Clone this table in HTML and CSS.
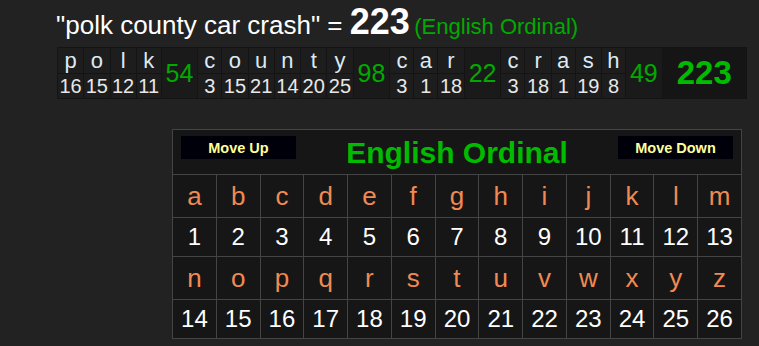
FILE: index.html
```html
<!DOCTYPE html>
<html>
<head>
<meta charset="utf-8">
<link rel="stylesheet" href="styles.css">
</head>
<body>
<div class="page">
  <div class="title"><span class="phrase">"polk county car crash" = </span><span class="total">223</span> <span class="cname">(English Ordinal)</span></div>
  <table class="words">
    <tr>
      <td class="l">p</td><td class="l">o</td><td class="l">l</td><td class="l">k</td><td class="sum" rowspan="2">54</td>
      <td class="l">c</td><td class="l">o</td><td class="l">u</td><td class="l">n</td><td class="l">t</td><td class="l">y</td><td class="sum" rowspan="2">98</td>
      <td class="l">c</td><td class="l">a</td><td class="l">r</td><td class="sum" rowspan="2">22</td>
      <td class="l">c</td><td class="l">r</td><td class="l">a</td><td class="l">s</td><td class="l">h</td><td class="sum" rowspan="2">49</td>
      <td class="grand" rowspan="2">223</td>
    </tr>
    <tr>
      <td class="n">16</td><td class="n">15</td><td class="n">12</td><td class="n">11</td>
      <td class="n">3</td><td class="n">15</td><td class="n">21</td><td class="n">14</td><td class="n">20</td><td class="n">25</td>
      <td class="n">3</td><td class="n">1</td><td class="n">18</td>
      <td class="n">3</td><td class="n">18</td><td class="n">1</td><td class="n">19</td><td class="n">8</td>
    </tr>
  </table>
  <table class="chart">
    <tr class="hd">
      <td colspan="13">
        <div class="hdbar">
          <button class="mv">Move Up</button>
          <span class="cipher-title">English Ordinal</span>
          <button class="mv">Move Down</button>
        </div>
      </td>
    </tr>
    <tr class="lt"><td>a</td><td>b</td><td>c</td><td>d</td><td>e</td><td>f</td><td>g</td><td>h</td><td>i</td><td>j</td><td>k</td><td>l</td><td>m</td></tr>
    <tr class="nm"><td>1</td><td>2</td><td>3</td><td>4</td><td>5</td><td>6</td><td>7</td><td>8</td><td>9</td><td>10</td><td>11</td><td>12</td><td>13</td></tr>
    <tr class="lt"><td>n</td><td>o</td><td>p</td><td>q</td><td>r</td><td>s</td><td>t</td><td>u</td><td>v</td><td>w</td><td>x</td><td>y</td><td>z</td></tr>
    <tr class="nm"><td>14</td><td>15</td><td>16</td><td>17</td><td>18</td><td>19</td><td>20</td><td>21</td><td>22</td><td>23</td><td>24</td><td>25</td><td>26</td></tr>
  </table>
</div>
</body>
</html>
```

FILE: styles.css
```css
html, body {
  margin: 0;
  padding: 0;
  background: #222222;
  font-family: "Liberation Sans", Arial, sans-serif;
}

.page {
  padding: 5px 0 0 56px;
}

.title {
  color: #ffffff;
  line-height: 34px;
  height: 36px;
  white-space: nowrap;
}

.phrase {
  font-size: 26px;
}

.total {
  font-size: 36px;
  font-weight: bold;
}

.cname {
  font-size: 22px;
  color: #00aa00;
}

.words {
  border-collapse: separate;
  border-spacing: 1px;
  background: #141414;
  margin: 6px 0 0 1px;
}

.words td {
  background: #1d1d1d;
  text-align: center;
  padding: 0 1.5px;
  min-width: 20px;
}

.words .l {
  font-size: 22px;
  color: #dce9f6;
  height: 25px;
  line-height: 25px;
}

.words .n {
  font-size: 20px;
  color: #e8e8e8;
  height: 24px;
  line-height: 24px;
}

.words .sum {
  font-size: 25px;
  color: #00aa00;
  padding: 0 4px;
  background: #1a1a1a;
}

.words .grand {
  font-size: 33px;
  font-weight: bold;
  color: #00bb00;
  padding: 0 14px;
  background: #151515;
}

.chart {
  border-collapse: collapse;
  table-layout: fixed;
  width: 570px;
  margin: 30px 0 0 116px;
  background: #161616;
}

.chart td {
  border: 1px solid #444444;
  text-align: center;
  padding: 0;
}

.chart .hd td {
  height: 44px;
  vertical-align: top;
}

.hdbar {
  display: flex;
  justify-content: space-between;
  align-items: flex-start;
  padding: 5px 8px 0 8px;
}

.mv {
  width: 115px;
  height: 23px;
  margin-top: 1px;
  border: none;
  padding: 0;
  background: #00000a;
  color: #ffff99;
  font-family: "Liberation Sans", Arial, sans-serif;
  font-size: 14.5px;
  font-weight: bold;
}

.cipher-title {
  font-size: 30px;
  line-height: 35px;
  font-weight: bold;
  color: #00bb00;
}

.chart .lt td {
  height: 42px;
  font-size: 26px;
  color: #f08a52;
}

.chart .nm td {
  height: 38px;
  font-size: 24px;
  color: #ffffff;
}
```
